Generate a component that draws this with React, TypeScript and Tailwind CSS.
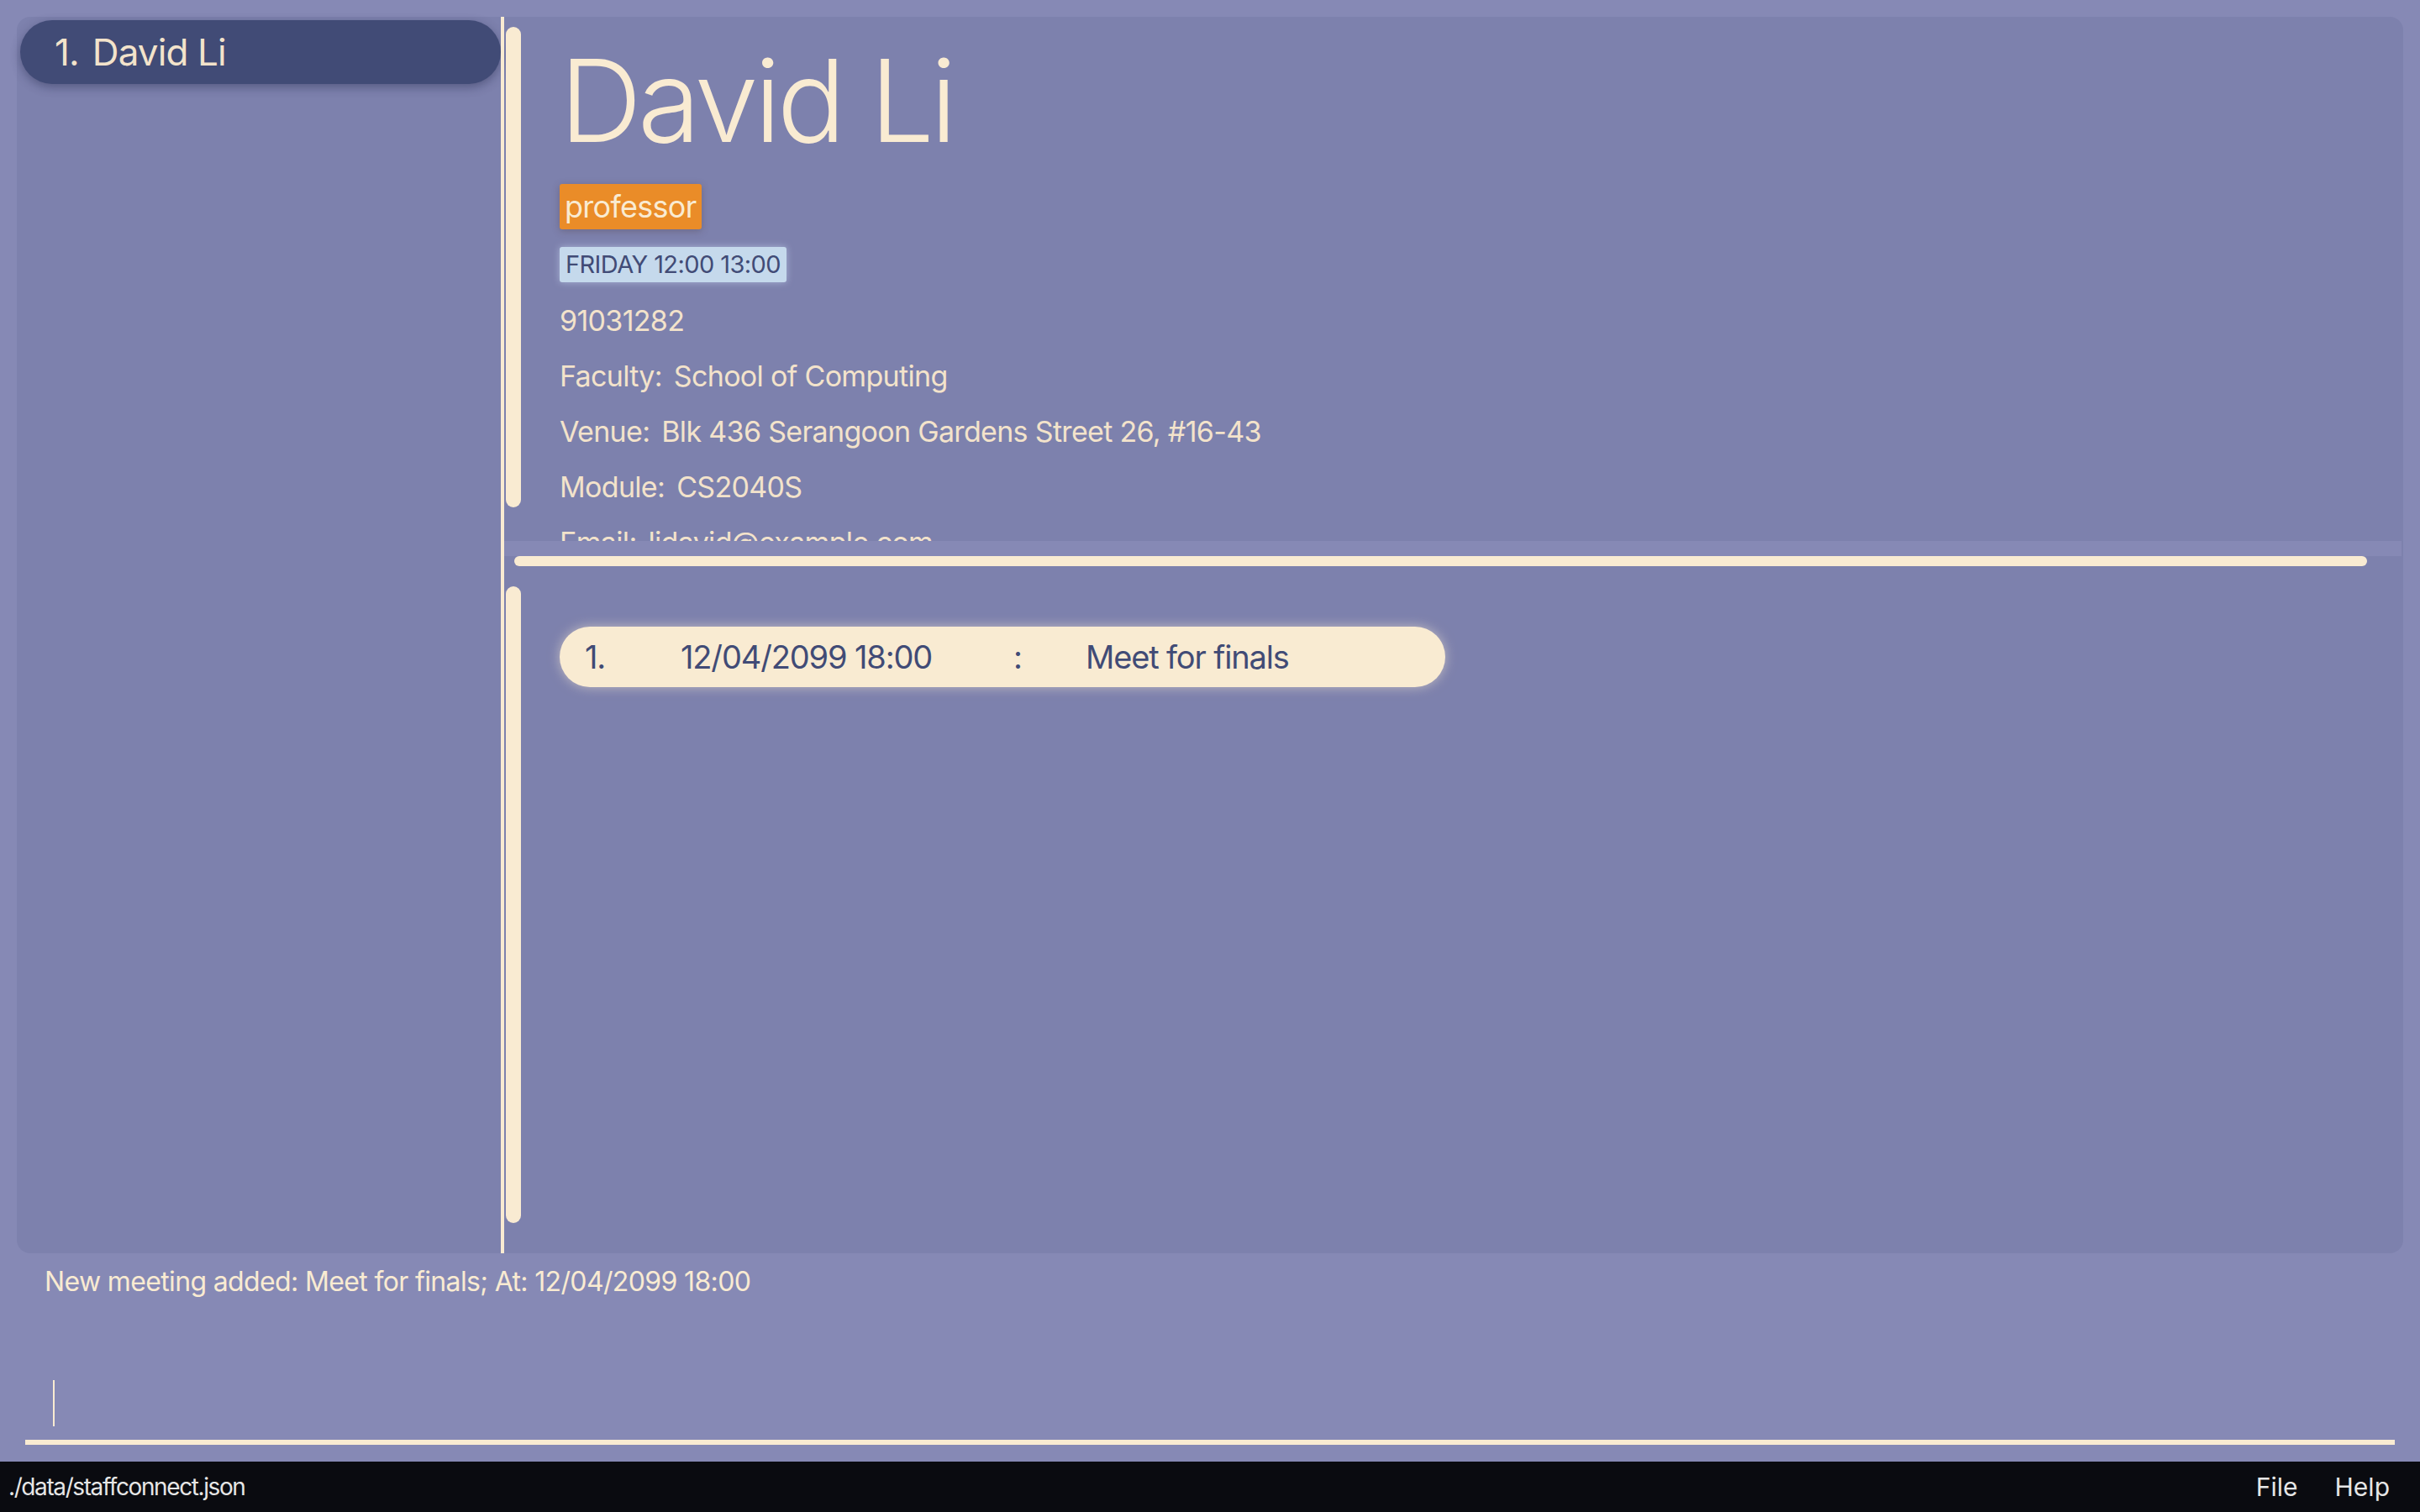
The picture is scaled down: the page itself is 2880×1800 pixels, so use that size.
import React from "react";

const CREAM = "bg-[#f9ebd2]";

function PersonCard() {
    return (
        <div className="h-[76px] rounded-full bg-[#414b76] shadow-[0_4px_12px_rgba(40,45,80,0.45)] flex items-center pl-[41px] text-[44px] text-[#f3e3cb] tracking-[-0.02em]">
            <span>1.</span>
            <span className="ml-[16px]">David Li</span>
        </div>
    );
}

function DetailLine({ label, value }: { label?: string; value: string }) {
    return (
        <div className="text-[34px] leading-[66px] text-[#f3e3cb] tracking-[-0.02em] whitespace-nowrap">
            {label && <span className="mr-[14px]">{label}</span>}
            <span>{value}</span>
        </div>
    );
}

function MeetingCard() {
    return (
        <div className="w-[1054px] h-[72px] rounded-full bg-[#f9ebd2] shadow-[0_0_14px_rgba(249,235,210,0.55)] flex items-center pl-[30px] text-[38px] text-[#414b76] tracking-[-0.03em] whitespace-nowrap">
            <span className="w-[114px]">1.</span>
            <span className="w-[396px]">12/04/2099 18:00</span>
            <span className="w-[86px]">:</span>
            <span>Meet for finals</span>
        </div>
    );
}

export default function App() {
    return (
        <div
            className="w-[2880px] h-[1800px] bg-[#8689b5] flex flex-col overflow-hidden"
            style={{ fontFamily: "Inter, 'Noto Sans', sans-serif" }}
        >
            {/* main panel */}
            <div className="px-[20px] pt-[20px]">
                <div className="h-[1472px] bg-[#7d81ad] rounded-[16px] flex">
                    {/* person list */}
                    <div className="w-[576px] pl-[4px] pt-[4px]">
                        <PersonCard />
                    </div>

                    <div className={`w-[4px] ${CREAM}`} />

                    {/* right column */}
                    <div className="flex-1 flex flex-col min-w-0">
                        {/* details */}
                        <div className="h-[624px] flex overflow-hidden">
                            <div className="ml-[2px] mt-[12px] w-[18px] h-[572px] rounded-full bg-[#f9ebd2]" />
                            <div className="pl-[46px] pt-[32px] flex flex-col items-start">
                                <div className="text-[136px] leading-none font-light text-[#f9ebd2] tracking-[-0.035em]">David Li</div>
                                <div className="mt-[31px] h-[56px] px-[6px] flex items-center bg-[#ea8c28] rounded-[3px] text-[36px] text-[#f9ebd2] tracking-[-0.02em] shadow-[0_2px_8px_rgba(80,60,60,0.35)]">
                                    professor
                                </div>
                                <div className="mt-[21px] h-[42px] px-[7px] flex items-center bg-[#c5d9ec] rounded-[3px] text-[29px] text-[#414b76] tracking-[-0.02em] shadow-[0_0_8px_rgba(200,215,240,0.6)]">
                                    FRIDAY 12:00 13:00
                                </div>
                                <div className="mt-[13px]">
                                    <DetailLine value="91031282" />
                                    <DetailLine label="Faculty:" value="School of Computing" />
                                    <DetailLine label="Venue:" value="Blk 436 Serangoon Gardens Street 26, #16-43" />
                                    <DetailLine label="Module:" value="CS2040S" />
                                    <DetailLine label="Email:" value="lidavid@example.com" />
                                </div>
                            </div>
                        </div>

                        {/* horizontal scroll bar */}
                        <div className="h-[18px] mr-[2px] bg-[#8689b5]" />
                        <div className="h-[12px] ml-[12px] mr-[43px] rounded-full bg-[#f9ebd2]" />

                        {/* meetings */}
                        <div className="flex-1 flex">
                            <div className="ml-[2px] mt-[24px] w-[18px] h-[758px] rounded-full bg-[#f9ebd2]" />
                            <div className="pl-[46px] pt-[72px]">
                                <MeetingCard />
                            </div>
                        </div>
                    </div>
                </div>
            </div>

            {/* result display */}
            <div className="pl-[53px] mt-[14px] text-[32px] leading-[40px] text-[#f9ebd2] tracking-[-0.02em]">
                New meeting added: Meet for finals; At: 12/04/2099 18:00
            </div>

            {/* command box */}
            <div className="mt-[97px] pl-[63px]">
                <div className="w-[2px] h-[55px] bg-[#f9ebd2]" />
            </div>
            <div className="mt-[16px] ml-[30px] w-[2820px] h-[6px] bg-[#f9ebd2]" />

            {/* status bar */}
            <div className="mt-auto h-[60px] bg-[#0a0b10] flex items-center pl-[10px] pr-[36px] text-[30px] text-[#e6e6e6]">
                <span className="text-[28px] tracking-[-0.05em]">./data/staffconnect.json</span>
                <div className="ml-auto flex gap-[44px]">
                    <span>File</span>
                    <span>Help</span>
                </div>
            </div>
        </div>
    );
}
